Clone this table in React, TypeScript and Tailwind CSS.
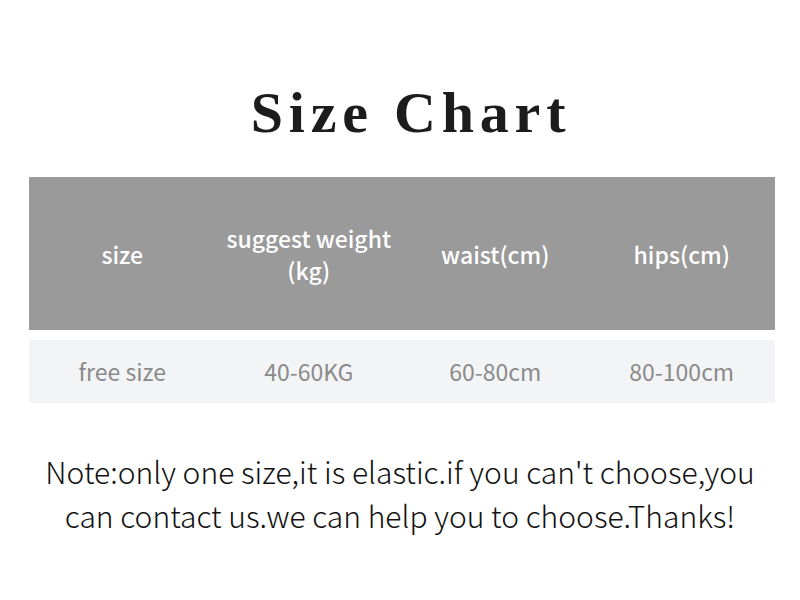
import React from 'react';

const headers: React.ReactNode[] = [
  'size',
  <>
    suggest weight
    <br />
    (kg)
  </>,
  'waist(cm)',
  'hips(cm)',
];
const values = ['free size', '40-60KG', '60-80cm', '80-100cm'];

export default function App() {
  return (
    <div className="w-[800px] h-[600px] bg-white pt-[78px]">
      <h1 className="pl-[22px] text-center text-[58px] leading-[70px] font-bold tracking-[0.1em] text-[#1c1c1c] font-['Liberation_Serif',serif]">
        Size Chart
      </h1>

      <div className="ml-[29px] w-[746px] mt-[29px] font-['Noto_Sans_CJK_SC','Noto_Sans',sans-serif]">
        {/* header band */}
        <div className="grid grid-cols-4 h-[153px] bg-[#9a9a9a] items-center">
          {headers.map((h, i) => (
            <div key={i} className="text-center text-white text-[23px] leading-[32px] font-medium whitespace-nowrap">
              {h}
            </div>
          ))}
        </div>

        {/* value row */}
        <div className="grid grid-cols-4 h-[63px] mt-[10px] bg-[#f3f4f6] items-center">
          {values.map((v) => (
            <div key={v} className="text-center text-[#8a8a8a] text-[23px]">
              {v}
            </div>
          ))}
        </div>
      </div>

      <p className="mt-[46px] text-center text-[30px] leading-[44px] font-light text-[#111] font-['Noto_Sans_CJK_SC','Noto_Sans',sans-serif]">
        Note:only one size,it is elastic.if you can't choose,you
        <br />
        can contact us.we can help you to choose.Thanks!
      </p>
    </div>
  );
}
